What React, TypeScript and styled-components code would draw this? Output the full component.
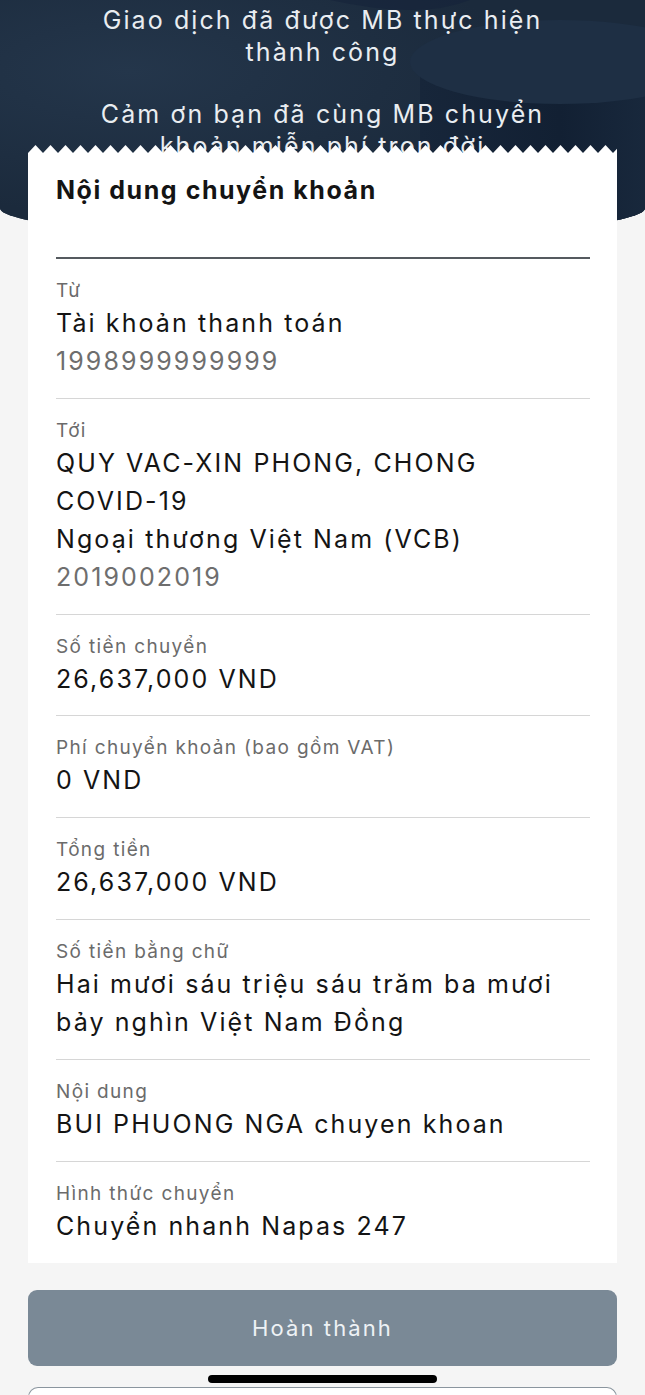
import React from "react";
import styled, { createGlobalStyle } from "styled-components";

const FONT = `"Inter", "Noto Sans", "DejaVu Sans", sans-serif`;

const GlobalStyle = createGlobalStyle`
  html, body { margin: 0; padding: 0; }
  body {
    background: #f5f5f5;
    font-family: ${FONT};
    -webkit-font-smoothing: antialiased;
  }
  * { box-sizing: border-box; }
`;

const Page = styled.div`
  position: relative;
  width: 645px;
  min-height: 1395px;
  overflow: hidden;
  background: #f5f5f5;
`;

const Hero = styled.header`
  position: relative;
  height: 238px;
  background: #1b2a3c;
  border-radius: 0 0 50% 50% / 0 0 30px 30px;
  overflow: hidden;
  padding-top: 4px;
`;

const HeroArt = styled.svg`
  position: absolute;
  inset: 0;
  width: 100%;
  height: 100%;
`;

const HeroText = styled.div`
  position: relative;
  width: 480px;
  margin: 0 auto;
  text-align: center;
  color: #e9edf1;
  font-size: 25px;
  line-height: 32px;
  letter-spacing: 2.1px;
`;

const HeroPara = styled.p`
  margin: 0 0 30px;
`;

const Card = styled.section`
  position: relative;
  margin: -93px 28px 0;
`;

const ZIG_POINTS = (() => {
  const pts: string[] = ["0 8px"];
  for (let i = 1; i <= 80; i++) {
    const x = i * 7.5;
    pts.push(`${x}px ${i % 2 === 1 ? 0 : 8}px`);
  }
  pts.push("100% 8px");
  return `polygon(${pts.join(", ")})`;
})();

const Zigzag = styled.div`
  height: 8px;
  background: #ffffff;
  clip-path: ${ZIG_POINTS};
`;

const CardBody = styled.div`
  background: #ffffff;
  padding: 0 27px 0 28px;
`;

const CardTitle = styled.h2`
  margin: 0;
  padding: 22px 0 52px;
  font-size: 25px;
  line-height: 30px;
  font-weight: 700;
  letter-spacing: 1.55px;
  color: #141414;
  border-bottom: 2px solid #555a5f;
`;

const Row = styled.div<{ $last?: boolean }>`
  padding: 19px 0 ${(p) => (p.$last ? "18px" : "17.8px")};
  border-bottom: ${(p) => (p.$last ? "none" : "1.5px solid #d6d6d6")};
`;

const Label = styled.div`
  font-size: 19px;
  line-height: 26px;
  letter-spacing: 1.35px;
  color: #6b6b6b;
`;

const Value = styled.div<{ $muted?: boolean }>`
  font-size: 25px;
  line-height: 38px;
  letter-spacing: 2.1px;
  color: ${(p) => (p.$muted ? "#6e6e6e" : "#141414")};
`;

const Footer = styled.div`
  padding: 27px 28px 0;
`;

const DoneButton = styled.button`
  display: block;
  width: 100%;
  height: 76px;
  border: none;
  border-radius: 9px;
  background: #7a8996;
  color: #eef2f5;
  font-family: ${FONT};
  font-size: 22px;
  letter-spacing: 2.1px;
`;

const SecondBox = styled.div`
  margin-top: 21px;
  height: 40px;
  border: 1.5px solid #8a959e;
  border-bottom: none;
  border-radius: 10px 10px 0 0;
  background: #ffffff;
`;

const HomeBar = styled.div`
  position: absolute;
  left: 208px;
  top: 1375px;
  width: 229px;
  height: 8px;
  border-radius: 4px;
  background: #000000;
`;

type Item = { label: string; values: string[]; mutedLast?: boolean };

const items: Item[] = [
  { label: "Từ", values: ["Tài khoản thanh toán", "1998999999999"], mutedLast: true },
  {
    label: "Tới",
    values: ["QUY VAC-XIN PHONG, CHONG", "COVID-19", "Ngoại thương Việt Nam (VCB)", "2019002019"],
    mutedLast: true,
  },
  { label: "Số tiền chuyển", values: ["26,637,000 VND"] },
  { label: "Phí chuyển khoản (bao gồm VAT)", values: ["0 VND"] },
  { label: "Tổng tiền", values: ["26,637,000 VND"] },
  { label: "Số tiền bằng chữ", values: ["Hai mươi sáu triệu sáu trăm ba mươi", "bảy nghìn Việt Nam Đồng"] },
  { label: "Nội dung", values: ["BUI PHUONG NGA chuyen khoan"] },
  { label: "Hình thức chuyển", values: ["Chuyển nhanh Napas 247"] },
];

export default function App() {
  return (
    <Page>
      <GlobalStyle />
      <Hero>
        <HeroArt viewBox="0 0 645 238" preserveAspectRatio="none" aria-hidden>
          <defs>
            <linearGradient id="side" x1="0" x2="1" y1="0" y2="0">
              <stop offset="0" stopColor="#17263a" />
              <stop offset="0.5" stopColor="#122033" />
              <stop offset="1" stopColor="#1c2d42" />
            </linearGradient>
            <radialGradient id="glow" cx="0.2" cy="0.3" r="0.6">
              <stop offset="0" stopColor="#24364b" />
              <stop offset="1" stopColor="#1b2a3c" />
            </radialGradient>
          </defs>
          <rect width="645" height="238" fill="url(#glow)" />
          <path d="M420 70 L420 238 L700 238 L700 70 Z" fill="url(#side)" />
          <ellipse cx="560" cy="62" rx="150" ry="42" fill="#1e2f44" />
          <path d="M330 0 Q420 20 470 0 Z" fill="#15233a" opacity="0.6" />
        </HeroArt>
        <HeroText>
          <HeroPara>Giao dịch đã được MB thực hiện thành công</HeroPara>
          <HeroPara>Cảm ơn bạn đã cùng MB chuyển khoản miễn phí trọn đời</HeroPara>
        </HeroText>
      </Hero>
      <Card>
        <Zigzag />
        <CardBody>
          <CardTitle>Nội dung chuyển khoản</CardTitle>
          {items.map((it, i) => (
            <Row key={it.label} $last={i === items.length - 1}>
              <Label>{it.label}</Label>
              {it.values.map((v, j) => (
                <Value key={j} $muted={it.mutedLast && j === it.values.length - 1}>
                  {v}
                </Value>
              ))}
            </Row>
          ))}
        </CardBody>
      </Card>
      <Footer>
        <DoneButton>Hoàn thành</DoneButton>
        <SecondBox />
      </Footer>
      <HomeBar />
    </Page>
  );
}
